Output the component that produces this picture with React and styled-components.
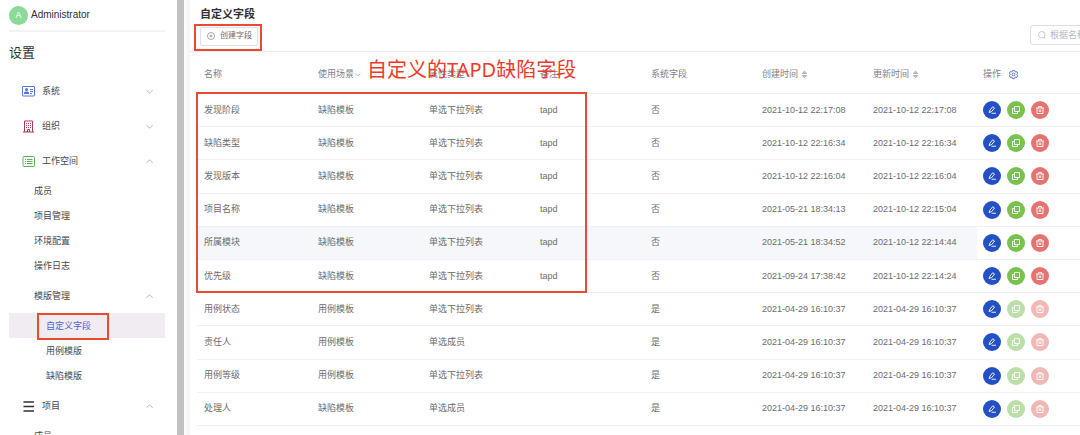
import React, { memo } from 'react'
import styled, { createGlobalStyle } from 'styled-components'

const GlobalStyle = createGlobalStyle`
  * {
    box-sizing: border-box;
  }

  body {
    margin: 0;
    overflow: hidden;
    background-color: #fff;
    color: #6a6c70;
    font: 9px/1 "Liberation Sans", "Noto Sans CJK SC", sans-serif;
  }

  ul {
    margin: 0;
    padding: 0;
    list-style: none;
  }

  a {
    color: inherit;
    text-decoration: none;
  }

  button, input {
    font: inherit;
    color: inherit;
  }
`

const Page = styled.div`
  display: flex;
  height: 100vh;
  overflow: hidden;
`

const Sidebar = styled.aside`
  flex: none;
  width: 184px;
  height: 100%;
  padding: 0 12px 0 9px;
  overflow: hidden;
  border-right: 7px solid #c1c1c1;
`

const User = styled.div`
  display: flex;
  align-items: center;
  gap: 3px;
  height: 32px;
  border-bottom: 2px solid #f3f3f3;
  color: #303133;
  font-size: 10px;

  .avatar {
    width: 19px;
    height: 19px;
    border-radius: 50%;
    background-color: #8bdb98;
    color: #fff;
    font-size: 9px;
    line-height: 19px;
    text-align: center;
  }
`

const SideTitle = styled.h1`
  margin: 0;
  height: 41px;
  color: #303133;
  font-size: 13px;
  font-weight: 400;
  line-height: 42px;
`

const GroupLink = styled.a`
  display: flex;
  align-items: center;
  height: 35px;
  padding: 1px 12px 0 ${p => (p.$nested ? 25 : 13)}px;
  color: #46484c;

  .icon {
    flex: none;
    width: 13px;
    height: 13px;
    margin-right: 7px;
  }

  .arrow {
    width: 7px;
    height: 7px;
    margin-left: auto;
    color: #a8abb2;
  }
`

const SubLink = styled.a`
  position: relative;
  display: block;
  height: 25px;
  padding-left: ${p => (p.$deep ? 37 : 25)}px;
  background-color: ${p => (p.$active ? '#f0ecf2' : 'transparent')};
  color: ${p => (p.$active ? '#4a64d2' : '#46484c')};
  line-height: 27px;
`

const Mark = styled.span`
  position: absolute;
  top: ${p => p.$top}px;
  left: ${p => p.$left}px;
  width: ${p => p.$width}px;
  height: ${p => p.$height}px;
  border: 2px solid #eb4a30;
  pointer-events: none;
`

const Main = styled.main`
  flex: 1;
  min-width: 0;
  padding-left: 6px;
  overflow: hidden;
  background: linear-gradient(to right, #fdfdfd, #f4f4f4 5px, #fff 7px);
`

const Content = styled.div`
  min-width: 960px;
`

const Header = styled.header`
  height: 52px;
  padding: 8px 10px 0;
  border-bottom: 1px solid #ececef;

  h2 {
    margin: 0;
    color: #303133;
    font-size: 11px;
    line-height: 13px;
  }
`

const Toolbar = styled.div`
  display: flex;
  align-items: center;
  justify-content: space-between;
  height: 30px;
`

const CreateWrap = styled.div`
  position: relative;
`

const CreateButton = styled.button`
  display: flex;
  align-items: center;
  gap: 5px;
  height: 19px;
  padding: 0 5px 0 6px;
  border: 1px solid #dcdfe6;
  border-radius: 2px;
  background-color: #fff;
  font-size: 8px;
  white-space: nowrap;

  svg {
    width: 8px;
    height: 8px;
    stroke-width: 1.2;
  }
`

const Search = styled.label`
  display: flex;
  align-items: center;
  gap: 4px;
  width: 110px;
  height: 20px;
  padding: 0 7px;
  margin-bottom: 3px;
  border: 1px solid #dcdfe6;
  border-radius: 3px;
  color: #b4b8c0;

  svg {
    flex: none;
    width: 8px;
    height: 8px;
  }

  input {
    width: 100%;
    padding: 0;
    border: 0;
    outline: 0;
    background: none;
  }

  input::placeholder {
    color: #b4b8c0;
    opacity: 1;
  }
`

const TableWrap = styled.div`
  position: relative;
  padding-left: 7px;
`

const Table = styled.table`
  width: 100%;
  height: 374px;
  table-layout: fixed;
  border-collapse: separate;
  border-spacing: 0;

  th, td {
    padding: 0 7px;
    border-bottom: 1px solid #f0f1f4;
    text-align: left;
    white-space: nowrap;
  }

  th {
    height: 42px;
    padding-top: 4px;
    color: #7d8087;
    font-weight: 400;
  }

  .name {
    width: 114px;
  }

  .field {
    width: 111px;
  }
`

const Row = styled.tr`
  background-color: ${p => (p.$hover ? '#f5f7fa' : '#fff')};

  td:last-child {
    background-color: #fff;
  }
`

const HeadButton = styled.button`
  display: inline-flex;
  align-items: center;
  gap: ${p => p.$gap || 0}px;
  padding: 0;
  border: 0;
  background: none;

  svg {
    width: 7px;
    height: 9px;
    color: #a8abb2;
  }
`

const HeadActions = styled.div`
  display: flex;
  align-items: center;
  gap: 8px;
  margin-left: -1px;

  button {
    display: flex;
    padding: 0;
    border: 0;
    background: none;
    color: #4763cf;
  }

  svg {
    width: 9px;
    height: 9px;
  }
`

const Actions = styled.div`
  display: flex;
  gap: 6px;
  margin-left: -1px;
`

const RoundButton = styled.button`
  display: flex;
  align-items: center;
  justify-content: center;
  width: 18px;
  height: 18px;
  padding: 0;
  border: 0;
  border-radius: 50%;
  background-color: ${p => p.$color};
  color: #fff;

  &:disabled {
    opacity: 0.5;
  }

  svg {
    width: 8px;
    height: 8px;
    stroke-width: 1.8;
  }
`

const Note = styled.p`
  position: absolute;
  top: 3px;
  left: 177px;
  margin: 0;
  color: #ee3a2c;
  font-family: "Noto Sans", "Noto Sans CJK SC", sans-serif;
  font-size: 20px;
  line-height: 30px;
  white-space: nowrap;
`

const Svg = ({ children, box = 16, ...rest }) => (
  <svg
    viewBox={`0 0 ${box} ${box}`}
    fill="none"
    stroke="currentColor"
    strokeWidth="1.5"
    aria-hidden="true"
    {...rest}
  >
    {children}
  </svg>
)

const Arrow = ({ up }) => (
  <Svg className="arrow" strokeWidth="2">
    <path d={up ? 'M1 11l7-7 7 7' : 'M1 5l7 7 7-7'} />
  </Svg>
)

const FilterArrow = () => (
  <Svg strokeWidth="2">
    <path d="M4 6l5 5 5-5" />
  </Svg>
)

const SystemIcon = () => (
  <Svg className="icon" box={26} stroke="#5873e0" strokeWidth="2">
    <rect x="1" y="3" width="24" height="19" rx="1" />
    <circle cx="9" cy="9" r="3" fill="#5873e0" stroke="none" />
    <path d="M4 18v-2q0-3 3-3h4q3 0 3 3v2z" fill="#5873e0" stroke="none" />
    <path d="M16 9h6M16 13h6M16 17h4" />
  </Svg>
)

const OrgIcon = () => (
  <Svg className="icon" box={26} stroke="#a83a5c" strokeWidth="2">
    <path d="M5 24V2h16v22M2 24h22M11 24v-5h4v5" />
    <path d="M8 7h2M12 7h2M16 7h2M8 11h2M12 11h2M16 11h2M8 15h2M12 15h2M16 15h2" />
  </Svg>
)

const SpaceIcon = () => (
  <Svg className="icon" box={26} stroke="#5cb25a" strokeWidth="2">
    <rect x="2" y="3" width="23" height="20" rx="2" />
    <path d="M6 9h2M10 9h11M6 13h2M10 13h11M6 17h2M10 17h11" />
  </Svg>
)

const ProjectIcon = () => (
  <Svg className="icon" box={26} stroke="#303133" strokeWidth="3">
    <path d="M3 4h21M3 13h21M3 22h21" />
  </Svg>
)

const SortIcon = () => (
  <svg viewBox="0 0 14 18" fill="#b4b8c0" aria-hidden="true">
    <path d="M7 1l6 7H1zM7 17l6-7H1z" />
  </svg>
)

const EditIcon = () => (
  <Svg>
    <path d="M2 13L4 8l5.500-6.500L13 4l-5.500 7zM7 14.500h9" />
  </Svg>
)

const CopyIcon = () => (
  <Svg>
    <path d="M5 1h10v10H5zM5 5H1v10h10v-4" />
  </Svg>
)

const DeleteIcon = () => (
  <Svg>
    <path d="M0 4h16M5 4V1h6v3M2 4v11h12V4M6.500 7v5M9.500 7v5" />
  </Svg>
)

const GearIcon = () => (
  <Svg>
    <path d="M6 1h4l1 2.500 3-.5 1.500 3.500-2 1.500 2 1.500L14 13l-3-.5L10 15H6l-1-2.500-3 .5L.500 9.500l2-1.500-2-1.500L2 3l3 .5z" />
    <circle cx="8" cy="8" r="2.500" />
  </Svg>
)

const menu = [
  { name: '系统', icon: <SystemIcon /> },
  { name: '组织', icon: <OrgIcon /> },
  {
    name: '工作空间',
    icon: <SpaceIcon />,
    items: ['成员', '项目管理', '环境配置', '操作日志'],
    sub: { name: '模版管理', items: ['自定义字段', '用例模版', '缺陷模版'] }
  },
  { name: '项目', icon: <ProjectIcon />, items: ['成员'] }
]

const testTime = '2021-04-29 16:10:37'

const rows = [
  ['发现阶段', '缺陷模板', '单选下拉列表', 'tapd', '否', '2021-10-12 22:17:08', '2021-10-12 22:17:08'],
  ['缺陷类型', '缺陷模板', '单选下拉列表', 'tapd', '否', '2021-10-12 22:16:34', '2021-10-12 22:16:34'],
  ['发现版本', '缺陷模板', '单选下拉列表', 'tapd', '否', '2021-10-12 22:16:04', '2021-10-12 22:16:04'],
  ['项目名称', '缺陷模板', '单选下拉列表', 'tapd', '否', '2021-05-21 18:34:13', '2021-10-12 22:15:04'],
  ['所属模块', '缺陷模板', '单选下拉列表', 'tapd', '否', '2021-05-21 18:34:52', '2021-10-12 22:14:44'],
  ['优先级', '缺陷模板', '单选下拉列表', 'tapd', '否', '2021-09-24 17:38:42', '2021-10-12 22:14:24'],
  ['用例状态', '用例模板', '单选下拉列表', '', '是', testTime, testTime],
  ['责任人', '用例模板', '单选成员', '', '是', testTime, testTime],
  ['用例等级', '用例模板', '单选下拉列表', '', '是', testTime, testTime],
  ['处理人', '缺陷模板', '单选成员', '', '是', testTime, testTime]
]

const Menu = memo(() => (
  <nav>
    <ul>
      {menu.map(group => (
        <li key={group.name}>
          <GroupLink href="#">
            {group.icon}
            {group.name}
            <Arrow up={!!group.items} />
          </GroupLink>
          {group.items && (
            <ul>
              {group.items.map(item => (
                <li key={item}><SubLink href="#">{item}</SubLink></li>
              ))}
            </ul>
          )}
          {group.sub && (
            <>
              <GroupLink href="#" $nested>
                {group.sub.name}
                <Arrow up />
              </GroupLink>
              <ul>
                {group.sub.items.map((item, i) => (
                  <li key={item}>
                    <SubLink href="#" $deep $active={i === 0}>
                      {item}
                      {i === 0 && <Mark $top={0} $left={28} $width={72} $height={27} />}
                    </SubLink>
                  </li>
                ))}
              </ul>
            </>
          )}
        </li>
      ))}
    </ul>
  </nav>
))

const FieldTable = memo(() => (
  <Table>
    <thead>
      <tr>
        <th className="name">名称</th>
        <th className="field"><HeadButton>使用场景<FilterArrow /></HeadButton></th>
        <th className="field"><HeadButton>属性类型<FilterArrow /></HeadButton></th>
        <th className="field">备注</th>
        <th className="field">系统字段</th>
        <th className="field"><HeadButton $gap={3}>创建时间<SortIcon /></HeadButton></th>
        <th className="field"><HeadButton $gap={3}>更新时间<SortIcon /></HeadButton></th>
        <th>
          <HeadActions>
            操作
            <button aria-label="设置"><GearIcon /></button>
          </HeadActions>
        </th>
      </tr>
    </thead>
    <tbody>
      {rows.map(row => {
        const isSystem = row[4] === '是'
        return (
          <Row key={row[0]} $hover={row[0] === '所属模块'}>
            {row.map((text, i) => <td key={i}>{text}</td>)}
            <td>
              <Actions>
                <RoundButton $color="#2450c6" aria-label="编辑"><EditIcon /></RoundButton>
                <RoundButton $color="#79c150" aria-label="复制" disabled={isSystem}><CopyIcon /></RoundButton>
                <RoundButton $color="#e5736f" aria-label="删除" disabled={isSystem}><DeleteIcon /></RoundButton>
              </Actions>
            </td>
          </Row>
        )
      })}
    </tbody>
  </Table>
))

const App = () => {
  return (
    <Page>
      <GlobalStyle />
      <Sidebar>
        <User>
          <span className="avatar">A</span>
          Administrator
        </User>
        <SideTitle>设置</SideTitle>
        <Menu />
      </Sidebar>

      <Main>
        <Content>
          <Header>
            <h2>自定义字段</h2>
            <Toolbar>
              <CreateWrap>
                <CreateButton>
                  <Svg>
                    <circle cx="8" cy="8" r="7" />
                    <path d="M5 8h6M8 5v6" />
                  </Svg>
                  创建字段
                </CreateButton>
                <Mark $top={-3} $left={-6} $width={68} $height={27} />
              </CreateWrap>
              <Search>
                <Svg>
                  <circle cx="7.500" cy="7.500" r="6.500" />
                  <path d="M12 12l3 3" />
                </Svg>
                <input type="text" placeholder="根据名称搜索" aria-label="根据名称搜索" />
              </Search>
            </Toolbar>
          </Header>

          <TableWrap>
            <FieldTable />
            <Note>自定义的TAPD缺陷字段</Note>
            <Mark $top={40} $left={6} $width={391} $height={201} />
          </TableWrap>
        </Content>
      </Main>
    </Page>
  )
}

export default App
